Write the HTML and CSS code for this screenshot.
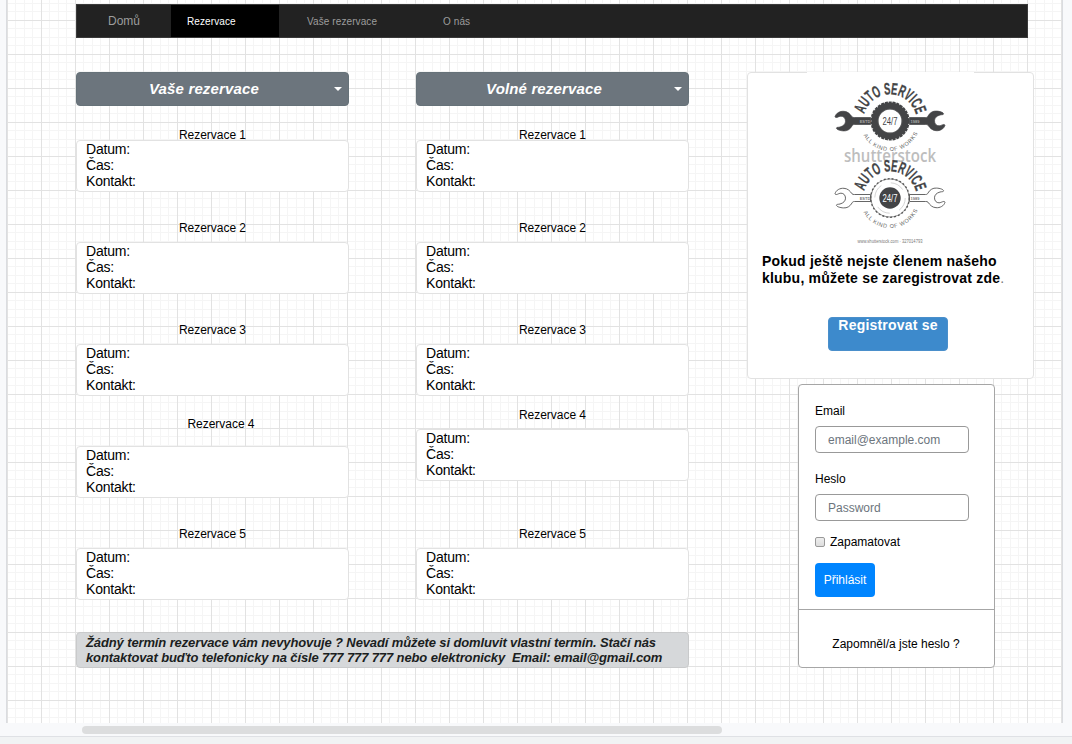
FILE: index.html
```html
<!DOCTYPE html>
<html lang="cs">
<head>
<meta charset="utf-8">
<title>Rezervace</title>
<link rel="stylesheet" href="styles.css">
</head>
<body>
<div class="canvas">
  <div class="sheet">
    <nav class="nav">
      <a class="nav-home">Domů</a>
      <a class="nav-item active">Rezervace</a>
      <a class="nav-item">Vaše rezervace</a>
      <a class="nav-item">O nás</a>
    </nav>
    <div class="content">
      <main class="main">
        <div class="columns">
          <section class="column">
            <button class="dropdown"><span>Vaše rezervace</span><i class="caret"></i></button>
            <h3 class="slot-title first">Rezervace 1</h3>
            <div class="slot">Datum:<br>Čas:<br>Kontakt:</div>
            <h3 class="slot-title">Rezervace 2</h3>
            <div class="slot">Datum:<br>Čas:<br>Kontakt:</div>
            <h3 class="slot-title">Rezervace 3</h3>
            <div class="slot">Datum:<br>Čas:<br>Kontakt:</div>
            <h3 class="slot-title shifted">Rezervace 4</h3>
            <div class="slot">Datum:<br>Čas:<br>Kontakt:</div>
            <h3 class="slot-title">Rezervace 5</h3>
            <div class="slot">Datum:<br>Čas:<br>Kontakt:</div>
          </section>
          <section class="column">
            <button class="dropdown"><span>Volné rezervace</span><i class="caret"></i></button>
            <h3 class="slot-title first">Rezervace 1</h3>
            <div class="slot">Datum:<br>Čas:<br>Kontakt:</div>
            <h3 class="slot-title">Rezervace 2</h3>
            <div class="slot">Datum:<br>Čas:<br>Kontakt:</div>
            <h3 class="slot-title">Rezervace 3</h3>
            <div class="slot">Datum:<br>Čas:<br>Kontakt:</div>
            <h3 class="slot-title raised">Rezervace 4</h3>
            <div class="slot">Datum:<br>Čas:<br>Kontakt:</div>
            <h3 class="slot-title last">Rezervace 5</h3>
            <div class="slot">Datum:<br>Čas:<br>Kontakt:</div>
          </section>
        </div>
        <div class="note">Žádný termín rezervace vám nevyhovuje ? Nevadí můžete si domluvit vlastní termín. Stačí nás<br>kontaktovat buďto telefonicky na čísle 777 777 777 nebo elektronicky &nbsp;Email: email@gmail.com</div>
      </main>
      <aside class="side">
        <div class="join">
          <svg class="logo" width="167" height="175" viewBox="-83 -49 167 175">
            <defs>
              <path id="arcTop" d="M-26.700 0A26.700 26.700 0 0 1 26.700 0"/>
              <path id="arcBottom" d="M-26.5 14A30 30 0 0 0 28 11"/>
              <path id="wrench" d="M-55 -4.2C-54 -8 -50 -10 -46 -9.7C-42 -9.4 -40 -7 -38 -4.2C-37.5 -3.5 -36.5 -3.5 -35.500 -3.500H-19.500V3.500H-35.500C-37 3.500 -37.500 4 -38 5C-40 8.500 -43 10.200 -46.500 9.900C-50 9.800 -53.500 8.500 -53.500 7.300C-53.500 6 -52 6.500 -50 6C-46.500 5 -44.500 3 -44.500 .2C-44.500 -3 -46.500 -4.800 -49 -4.800C-51.500 -4.800 -54 -2.200 -55 -4.200Z"/>
            </defs>
            <text class="arc-title"><textPath href="#arcTop" startOffset="7" textLength="70" lengthAdjust="spacingAndGlyphs">AUTO SERVICE</textPath></text>
            <text class="arc-sub"><textPath href="#arcBottom" textLength="67" lengthAdjust="spacing">ALL KIND OF WORKS</textPath></text>
            <use href="#wrench" class="dark"/>
            <use href="#wrench" class="dark" transform="rotate(180)"/>
            <circle r="18.600" class="tread"/>
            <circle r="15" class="tyre"/>
            <circle r="12" class="hub-line"/>
            <text class="plate light" x="-25" y="1.500">ESTD</text>
            <text class="plate light" x="25" y="1.500">1989</text>
            <text class="hours" y="4" textLength="15" lengthAdjust="spacingAndGlyphs">24/7</text>
            <text class="mark" y="41" textLength="92" lengthAdjust="spacingAndGlyphs">shutterstock</text>
            <g transform="translate(0 77)">
              <text class="arc-title"><textPath href="#arcTop" startOffset="7" textLength="70" lengthAdjust="spacingAndGlyphs">AUTO SERVICE</textPath></text>
              <text class="arc-sub"><textPath href="#arcBottom" textLength="67" lengthAdjust="spacing">ALL KIND OF WORKS</textPath></text>
              <use href="#wrench" class="outline"/>
              <use href="#wrench" class="outline" transform="rotate(180)"/>
              <circle r="19" class="rim"/>
              <circle r="19.300" class="rim-teeth"/>
              <circle r="15.200" class="rim-inner"/>
              <circle r="10.700" class="hub"/>
              <text class="plate" x="-25" y="1.500">ESTD</text>
              <text class="plate" x="25" y="1.500">1989</text>
              <text class="hours light" y="4" textLength="15" lengthAdjust="spacingAndGlyphs">24/7</text>
            </g>
            <text class="url" y="121.500" textLength="65" lengthAdjust="spacingAndGlyphs">www.shutterstock.com · 327014793</text>
          </svg>
          <p class="join-text"><b>Pokud ještě nejste členem našeho<br>klubu, můžete se zaregistrovat zde</b>.</p>
          <button class="register">Registrovat se</button>
        </div>
        <form class="login">
          <div class="login-main">
            <label class="field-label">Email</label>
            <input class="field" type="text" placeholder="email@example.com">
            <label class="field-label second">Heslo</label>
            <input class="field" type="text" placeholder="Password">
            <div class="remember"><i class="check"></i><span>Zapamatovat</span></div>
            <button class="submit" type="button">Přihlásit</button>
          </div>
          <div class="forgot">Zapomněl/a jste heslo ?</div>
        </form>
      </aside>
    </div>
  </div>
</div>
<div class="scroll"><div class="thumb"></div></div>
<div class="footer"></div>
</body>
</html>
```

FILE: styles.css
```css
* { box-sizing: border-box; }
body {
  margin: 0;
  height: 744px;
  overflow: hidden;
  display: flex;
  flex-direction: column;
  background: #f8f9fb;
  font-family: "Liberation Sans", Arial, sans-serif;
  font-size: 12px;
  color: #000;
}
.canvas { height: 723px; flex: none; padding-left: 6px; }
.sheet {
  width: 1057px;
  height: 723px;
  padding: 4px 0 0 69px;
  border-left: 1px solid #dadce0;
  border-right: 1px solid #dadce0;
  background-color: #fff;
  background-image:
    linear-gradient(90deg, #e2e2e2 1px, transparent 1px),
    linear-gradient(#e2e2e2 1px, transparent 1px),
    linear-gradient(90deg, transparent 8px, #f5f5f5 8px, #f5f5f5 9px, transparent 9px, transparent 17px, #f5f5f5 17px, #f5f5f5 18px, transparent 18px, transparent 25px, #f5f5f5 25px, #f5f5f5 26px, transparent 26px),
    linear-gradient(transparent 8px, #f5f5f5 8px, #f5f5f5 9px, transparent 9px, transparent 17px, #f5f5f5 17px, #f5f5f5 18px, transparent 18px, transparent 25px, #f5f5f5 25px, #f5f5f5 26px, transparent 26px);
  background-size: 34px 34px;
  background-position: 0 20px;
}
.nav {
  display: flex;
  width: 952px;
  height: 34px;
  background: #222;
  border: 1px solid #3a3a3a;
  line-height: 33px;
  color: #9d9d9d;
}
.nav-home { width: 94px; text-align: center; }
.nav-item { padding-left: 16px; margin-right: 12px; width: 108px; font-size: 10px; letter-spacing: .1px; }
.nav-item + .nav-item { width: 124px; }
.nav-item.active { background: #000; color: #fff; }
.content { display: flex; margin-top: 34px; }
.main { width: 613px; }
.columns { display: flex; gap: 67px; }
.column { width: 273px; }
.dropdown {
  display: flex;
  align-items: center;
  width: 273px;
  height: 34px;
  padding: 0 6px 2px 0;
  border: 1px solid #667279;
  border-radius: 4px;
  background: #6c757d;
  color: #fff;
  font: italic bold 15px "Liberation Sans", Arial, sans-serif;
  letter-spacing: .15px;
}
.dropdown span { flex: 1; text-align: center; padding-right: 3px; }
.caret { border: 4px solid transparent; border-top-color: #fff; border-bottom: 0; margin: 2px 0 0; }
.slot-title { margin: 30px 0 8px; height: 12px; font: 12px/13px "Liberation Sans", Arial, sans-serif; text-align: center; letter-spacing: -.03px; }
.slot-title.first { margin: 22px 0 0; line-height: 14px; }
.slot-title.shifted { margin: 22px 0 16px; padding-left: 17px; }
.slot-title.raised { margin: 13px 0 8px; }
.slot-title.last { margin-top: 47px; }
.slot {
  height: 52px;
  padding: 0 9px;
  border: 1px solid #e2e2e2;
  border-radius: 4px;
  background: #fff;
  font-size: 14px;
  line-height: 16px;
  letter-spacing: -.2px;
}
.note {
  margin-top: 32px;
  height: 36px;
  padding: 2px 9px;
  border: 1px solid #c9cacb;
  border-radius: 4px;
  background: #d6d8da;
  color: #1b1e21;
  font-size: 13px;
  font-weight: bold;
  font-style: italic;
  line-height: 15px;
  letter-spacing: -.12px;
  white-space: nowrap;
}
.side { margin-left: 58px; width: 287px; }
.join {
  height: 307px;
  padding: 0 14px;
  border: 1px solid #e2e2e2;
  border-radius: 4px;
  background: #fff;
}
.logo { display: block; margin: -1px 0 0 45px; background: #fff; }
.logo text { font-family: "Liberation Sans Narrow", "Liberation Sans", sans-serif; fill: #434446; text-anchor: middle; }
.logo .arc-title { font-size: 16.500px; font-weight: bold; text-anchor: start; stroke: #434446; stroke-width: .3; }
.logo .arc-sub { font-size: 5.500px; fill: #666; text-anchor: start; }
.logo .hours { font-size: 11.500px; }
.logo .plate { font-size: 4px; font-weight: bold; fill: #777; }
.logo .mark { font-family: "Open Sans", sans-serif; font-size: 18px; font-weight: 600; fill: #bdbdbd; }
.logo .url { font-family: "Liberation Sans", sans-serif; font-size: 4.500px; fill: #777; }
.logo .light { fill: #fff; }
.logo .plate.light { fill: #aaa; }
.dark { fill: #434446; stroke: #434446; stroke-width: .7; }
.outline { fill: #fff; stroke: #555; stroke-width: .9; }
.tread { fill: none; stroke: #434446; stroke-width: 2; stroke-dasharray: 3 .9; }
.tyre { fill: #fff; stroke: #434446; stroke-width: 7; }
.hub-line { fill: none; stroke: #777; stroke-width: .4; }
.rim { fill: #fff; stroke: #666; stroke-width: .7; }
.rim-teeth { fill: none; stroke: #555; stroke-width: 1.300; stroke-dasharray: 2 2; }
.rim-inner { fill: none; stroke: #aaa; stroke-width: .5; stroke-dasharray: 14 10; }
.hub { fill: #434446; }
.join-text { margin: 6px 0 0; font-size: 14px; line-height: 17px; letter-spacing: .21px; white-space: nowrap; color: #777; }
.join-text b { color: #000; }
.register {
  display: block;
  width: 120px;
  height: 34px;
  margin: 30px 0 0 66px;
  padding: 0 0 17px;
  border: 1px solid #4a8fcb;
  border-radius: 4px;
  background: #3d8acc;
  color: #fff;
  font: bold 14px/15px "Liberation Sans", Arial, sans-serif;
  letter-spacing: .2px;
}
.login {
  width: 197px;
  height: 284px;
  margin: 5px 0 0 51px;
  border: 1px solid #a6a6a6;
  border-radius: 4px;
  background: #fff;
}
.login-main { height: 225px; padding: 19px 16px 0; border-bottom: 1px solid #a6a6a6; }
.field-label { display: block; height: 14px; line-height: 14px; margin-bottom: 8px; }
.field-label.second { margin-top: 19px; }
.field {
  display: block;
  width: 154px;
  height: 27px;
  padding: 0 12px;
  border: 1px solid #999;
  border-radius: 4px;
  background: #fff;
  font: 12px "Liberation Sans", Arial, sans-serif;
}
.field::placeholder { color: #6c757d; opacity: 1; }
.remember { display: flex; align-items: center; gap: 5px; height: 14px; margin: 14px 0; }
.check { width: 10px; height: 10px; border: 1px solid #999; border-radius: 2px; background: linear-gradient(#eee, #ddd); }
.submit {
  width: 60px;
  height: 34px;
  padding: 0;
  border: 0;
  border-radius: 4px;
  background: #0085ff;
  color: #fff;
  font: 12px "Liberation Sans", Arial, sans-serif;
}
.forgot { padding: 27px 1px 0 0; text-align: center; line-height: 14px; }
.scroll { height: 13px; flex: none; padding: 3px 0 0 82px; }
.thumb { width: 640px; height: 8px; border-radius: 4px; background: #dcddde; }
.footer { flex: 1; border-top: 1px solid #dfe1e5; background: #f1f3f4; }
```
